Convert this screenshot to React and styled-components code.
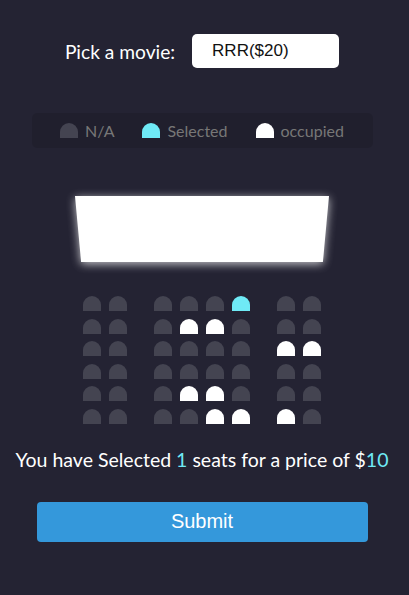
import styled, { createGlobalStyle } from "styled-components";

const GlobalStyle = createGlobalStyle`
  * { box-sizing: border-box; }
  body {
    margin: 0;
    background-color: #242333;
    color: #fff;
    font-family: Lato, "Open Sans", sans-serif;
  }
`;

const Page = styled.div`
  width: 404px;
  height: 595px;
  display: flex;
  flex-direction: column;
  align-items: center;
`;

const MovieRow = styled.div`
  display: flex;
  align-items: center;
  gap: 17px;
  margin-top: 34px;
  font-size: 19.2px;
`;

const Select = styled.div`
  width: 147px;
  height: 34px;
  background: #fff;
  border-radius: 5px;
  color: #111;
  font-family: "Liberation Sans", Arial, sans-serif;
  font-size: 17px;
  display: flex;
  align-items: center;
  padding-left: 20px;
`;

const seatColors = {
  na: "#444451",
  selected: "#6feaf6",
  occupied: "#ffffff",
};

const Seat = styled.div`
  width: 18px;
  height: 15px;
  background-color: ${(p) => seatColors[p.$type]};
  border-top-left-radius: 10px;
  border-top-right-radius: 10px;
`;

const Legend = styled.ul`
  list-style: none;
  margin: 45px 0 0;
  padding: 0;
  width: 341px;
  height: 35px;
  background: rgba(0, 0, 0, 0.1);
  border-radius: 5px;
  display: flex;
  justify-content: center;
  align-items: center;
  color: #777;
  font-size: 16px;
`;

const LegendItem = styled.li`
  display: flex;
  align-items: center;
  gap: 7px;
  margin: 0 14px;
`;

const LegendLabel = styled.small`
  font-size: inherit;
`;

const ScreenGlow = styled.div`
  margin-top: 48px;
  filter: drop-shadow(0 2px 5px rgba(255, 255, 255, 0.75));
`;

const Screen = styled.div`
  width: 254px;
  height: 66px;
  background: #fff;
  clip-path: polygon(0 0, 100% 0, 97.6% 100%, 2.4% 100%);
`;

const SeatGrid = styled.div`
  margin-top: 34px;
  display: flex;
  flex-direction: column;
  gap: 7.6px;
`;

const Row = styled.div`
  display: flex;
  gap: 27px;
`;

const Group = styled.div`
  display: flex;
  gap: 8px;
`;

const Summary = styled.p`
  margin: 25px 0 0;
  font-size: 19.5px;
  line-height: 22px;
`;

const Count = styled.span`
  color: #6feaf6;
`;

const SubmitButton = styled.button`
  margin-top: 31px;
  width: 331px;
  height: 40px;
  border: none;
  border-radius: 4px;
  background: #3498db;
  color: #fff;
  font-family: "Liberation Sans", Arial, sans-serif;
  font-size: 20px;
`;

const rows = [
  ["nn", "nnns", "nn"],
  ["nn", "noon", "nn"],
  ["nn", "nnnn", "oo"],
  ["nn", "nnnn", "nn"],
  ["nn", "noon", "nn"],
  ["nn", "nnoo", "on"],
];

const code = { n: "na", s: "selected", o: "occupied" };

export default function App() {
  return (
    <Page>
      <GlobalStyle />
      <MovieRow>
        <label>Pick a movie:</label>
        <Select>RRR($20)</Select>
      </MovieRow>

      <Legend>
        <LegendItem>
          <Seat $type="na" />
          <LegendLabel>N/A</LegendLabel>
        </LegendItem>
        <LegendItem>
          <Seat $type="selected" />
          <LegendLabel>Selected</LegendLabel>
        </LegendItem>
        <LegendItem>
          <Seat $type="occupied" />
          <LegendLabel>occupied</LegendLabel>
        </LegendItem>
      </Legend>

      <ScreenGlow>
        <Screen />
      </ScreenGlow>

      <SeatGrid>
        {rows.map((row, i) => (
          <Row key={i}>
            {row.map((group, j) => (
              <Group key={j}>
                {group.split("").map((c, k) => (
                  <Seat key={k} $type={code[c]} />
                ))}
              </Group>
            ))}
          </Row>
        ))}
      </SeatGrid>

      <Summary>
        You have Selected <Count>1</Count> seats for a price of $
        <Count>10</Count>
      </Summary>

      <SubmitButton>Submit</SubmitButton>
    </Page>
  );
}
